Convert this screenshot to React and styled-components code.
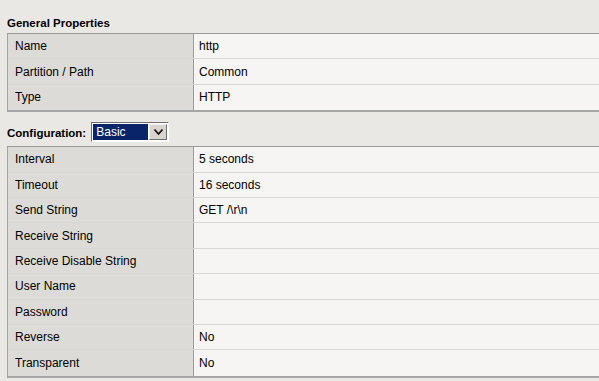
import React from 'react';
import styled, { createGlobalStyle } from 'styled-components';

const general = [
  ['Name', 'http'],
  ['Partition / Path', 'Common'],
  ['Type', 'HTTP'],
];

const config = [
  ['Interval', '5 seconds'],
  ['Timeout', '16 seconds'],
  ['Send String', 'GET /\\r\\n'],
  ['Receive String', ''],
  ['Receive Disable String', ''],
  ['User Name', ''],
  ['Password', ''],
  ['Reverse', 'No'],
  ['Transparent', 'No'],
];

const PropertyTable = ({ rows }) => (
  <Table>
    {rows.map(([label, value], i) => (
      <Row key={label} last={i === rows.length - 1}>
        <Label>{label}</Label>
        <Value>{value}</Value>
      </Row>
    ))}
  </Table>
);

const App = () => {
  return (
    <Page>
      <GlobalStyle />
      <SectionTitle>General Properties</SectionTitle>
      <PropertyTable rows={general} />
      <ConfigBar>
        <ConfigLabel>Configuration:</ConfigLabel>
        <Select>
          <Selected>Basic</Selected>
          <DropButton>
            <svg width="11" height="8" viewBox="0 0 11 8">
              <polyline points="1.5,1.5 5.5,6 9.5,1.5" fill="none" stroke="#111" strokeWidth="1.8" />
            </svg>
          </DropButton>
        </Select>
      </ConfigBar>
      <PropertyTable rows={config} />
    </Page>
  );
};

export default App;

const GlobalStyle = createGlobalStyle`
  html, body {
    margin: 0;
    padding: 0;
    background: #e9e8e4;
    overflow: hidden;
  }
  body {
    font-family: "Liberation Sans", Arial, sans-serif;
  }
`;

const Page = styled.div`
  width: 599px;
  height: 381px;
  padding-left: 7px;
  box-sizing: border-box;
  background: #e9e8e4;
  overflow: hidden;
`;

const SectionTitle = styled.div`
  margin-top: 16px;
  height: 14px;
  line-height: 14px;
  font-size: 11.5px;
  font-weight: bold;
  color: #000;
  margin-bottom: 3px;
`;

const Table = styled.div`
  width: 600px;
  border-top: 1px solid #9a9a9a;
  border-left: 1px solid #a3a3a3;
  border-bottom: 2px solid #a6a6a6;
`;

const Row = styled.div`
  display: grid;
  grid-template-columns: 186px 1fr;
  height: 25.4px;
  box-sizing: border-box;
  font-size: 12px;
  color: #000;
  border-bottom: ${p => (p.last ? 'none' : '1px solid #d7d7d5')};
`;

const Label = styled.div`
  display: flex;
  align-items: center;
  padding-left: 7px;
  background: #dddbd7;
  border-right: 1px solid #9c9c9c;
`;

const Value = styled.div`
  display: flex;
  align-items: center;
  padding-left: 5px;
  background: #f6f5f3;
`;

const ConfigBar = styled.div`
  display: flex;
  align-items: center;
  height: 20px;
  margin-top: 10px;
  margin-bottom: 4px;
`;

const ConfigLabel = styled.span`
  font-size: 11.5px;
  font-weight: bold;
  margin-right: 5px;
  padding-top: 2px;
`;

const Select = styled.div`
  display: flex;
  width: 78px;
  height: 20px;
  box-sizing: border-box;
  border: 1px solid;
  border-color: #6e6e6e #ffffff #ffffff #6e6e6e;
  background: #fff;
  padding: 1px;
`;

const Selected = styled.div`
  flex: 1;
  background: #0a246a;
  color: #fff;
  font-size: 12px;
  line-height: 16px;
  padding-left: 3px;
  margin-right: 1px;
  box-sizing: border-box;
`;

const DropButton = styled.div`
  width: 18px;
  display: flex;
  align-items: center;
  justify-content: center;
  background: #d8d5ce;
  box-sizing: border-box;
  border: 1px solid;
  border-color: #f2f1ee #6e6e6e #6e6e6e #f2f1ee;
`;
